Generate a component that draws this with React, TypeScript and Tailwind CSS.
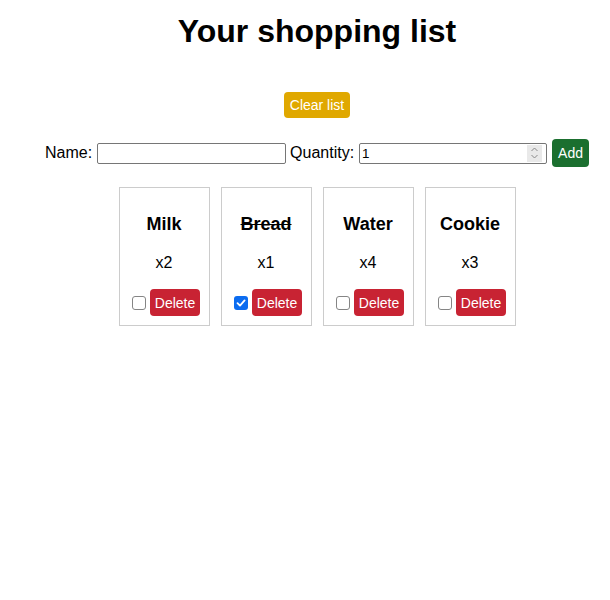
import React from "react";

const items = [
  { name: "Milk", qty: 2, done: false },
  { name: "Bread", qty: 1, done: true },
  { name: "Water", qty: 4, done: false },
  { name: "Cookie", qty: 3, done: false },
];

function Check({ checked }: { checked: boolean }) {
  if (checked) {
    return (
      <span className="mr-[4px] ml-[4px] flex h-[14px] w-[14px] items-center justify-center rounded-[3px] bg-[#0b6cf0]">
        <svg width="10" height="10" viewBox="0 0 10 10">
          <path d="M1.5 5.2 L4 7.6 L8.6 2.4" fill="none" stroke="white" strokeWidth="1.8" strokeLinecap="round" strokeLinejoin="round" />
        </svg>
      </span>
    );
  }
  return (
    <span className="mr-[4px] ml-[4px] block h-[14px] w-[14px] rounded-[3px] border-[1.5px] border-[#858585] bg-white" />
  );
}

export default function App() {
  return (
    <div
      className="min-h-[600px] bg-white pl-[24px] text-center text-black"
      style={{ fontFamily: '"Liberation Sans", Arial, sans-serif' }}
    >
      <h1 className="pt-[7px] text-[32px] font-bold leading-normal">Your shopping list</h1>
      <div className="mt-[37px] flex justify-center">
        <button className="h-[26px] rounded-[4px] bg-[#e0a800] px-[6px] text-[14px] leading-none text-white">
          Clear list
        </button>
      </div>
      <div className="mt-[21px] flex items-center justify-center text-[16px]">
        <span>Name:</span>
        <input
          type="text"
          className="ml-[5px] h-[21px] w-[189px] rounded-[2px] border border-[#767676] px-[2px] text-[13.33px]"
        />
        <span className="ml-[4px]">Quantity:</span>
        <div className="ml-[5px] flex h-[21px] w-[188px] items-center rounded-[2px] border border-[#767676] bg-white">
          <input
            type="text"
            defaultValue="1"
            className="h-full min-w-0 flex-1 bg-transparent px-[2px] text-[13.33px] outline-none"
          />
          <div className="mr-[4px] flex h-[17px] w-[15px] flex-col items-center justify-center bg-[#e9e9e9]">
            <svg width="9" height="14" viewBox="0 0 9 14">
              <path d="M1.5 5 L4.5 2 L7.5 5" fill="none" stroke="#8a8a8a" strokeWidth="1" />
              <path d="M1.5 9 L4.5 12 L7.5 9" fill="none" stroke="#8a8a8a" strokeWidth="1" />
            </svg>
          </div>
        </div>
        <button className="ml-[5px] h-[28px] rounded-[4px] bg-[#1b6f2f] px-[6px] text-[14px] leading-none text-white">
          Add
        </button>
      </div>
      <div className="mt-[20px] flex justify-center gap-[11px]">
        {items.map((it) => (
          <div
            key={it.name}
            className="flex h-[139px] w-[91px] flex-col items-center border border-[#cccccc] pt-[26px]"
          >
            <div className={"text-[18px] font-bold leading-[21px] " + (it.done ? "line-through" : "")}>
              {it.name}
            </div>
            <div className="mt-[19px] text-[16px] leading-[18px]">x{it.qty}</div>
            <div className="mt-[17px] flex items-center">
              <Check checked={it.done} />
              <button className="h-[27px] rounded-[4px] bg-[#c82333] px-[5px] text-[14px] leading-none text-white">
                Delete
              </button>
            </div>
          </div>
        ))}
      </div>
    </div>
  );
}
